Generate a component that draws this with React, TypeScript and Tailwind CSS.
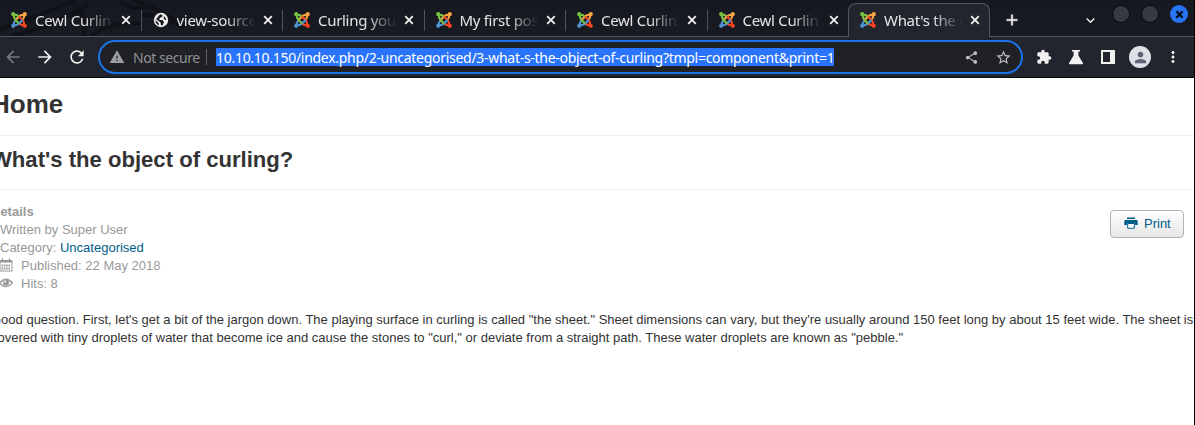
import React from "react";
import {
  MdArrowBack, MdArrowForward, MdRefresh, MdWarning, MdShare, MdStarBorder,
  MdExtension, MdMoreVert, MdPerson, MdAdd, MdExpandMore,
} from "react-icons/md";

function Joomla() {
  return (
    <svg viewBox="0 0 16 16" className="size-4 shrink-0" fill="none" strokeWidth="2.2" strokeLinecap="round">
      <g stroke="#f9a541"><circle cx="13.8" cy="2.2" r="1" fill="#f9a541" /><path d="M13 3C10.5 2.5 9.5 3 8 4.5L4.8 7.7M13 3.2C13.6 5 13 6 12 7" /></g>
      <g stroke="#f44321"><circle cx="13.8" cy="13.8" r="1" fill="#f44321" /><path d="M13 13C13.5 10.5 13 9.5 11.5 8L8.5 5M13 13C11 13.5 10 13 9 12.1" /></g>
      <g stroke="#5091cd"><circle cx="2.2" cy="13.8" r="1" fill="#5091cd" /><path d="M3 13C5.5 13.5 6.5 13 8 11.5L11 8.4M3 13C2.5 11 3 10 4 9" /></g>
      <g stroke="#7ac143"><circle cx="2.2" cy="2.2" r="1" fill="#7ac143" /><path d="M3 3C2.5 5.5 3 6.5 4.5 8L7.5 11M3 3C5 2.5 6 3 7 4" /></g>
    </svg>
  );
}

function Globe() {
  return (
    <svg viewBox="0 0 16 16" className="size-4 shrink-0">
      <circle cx="8" cy="8" r="7.2" fill="#f1f1f1" />
      <path d="M7 2.300L9.500 3L9 5L6.500 6V8H9.500L11 10L9.500 13.500L8 13L7.500 10.500L3 7L2.500 9.500Q3 12.500 6 13.500L5.500 11L2.500 8M11 4L13.500 7.500L12 8L10.500 6.500Z" fill="#17191f" />
    </svg>
  );
}

const tabs = ["Cewl Curlin", "view-source", "Curling you", "My first pos", "Cewl Curlin", "Cewl Curlin", "What's the o"];

function Tab({ title, index }: { title: string; index: number }) {
  const active = index === 6;
  return (
    <div className={`relative flex shrink-0 w-[141.5px] ${active ? "-ml-px mt-[3px] h-[34px] rounded-t-[8px] border border-b-0 border-[#56585d] bg-[#22252e] pl-[11px] pt-[8px]" : "h-[36px] pl-[11px] pt-[12px]"}`}>
      {title.startsWith("view") ? <Globe /> : <Joomla />}
      <div className="-mt-[3px] ml-[8px] h-[22px] w-[80px] whitespace-nowrap text-[15px] leading-[22px] tracking-[-0.3px] text-[#e6e6e6] [mask-image:linear-gradient(to_right,black_60%,transparent_98%)]">{title}</div>
      <svg viewBox="0 0 10 10" className="ml-[6px] mt-[3px] size-[10px] shrink-0"><path d="M1.200 1.200l7.600 7.600m0-7.600l-7.600 7.600" stroke="#f0f0ee" strokeWidth="1.8" /></svg>
      {index < 5 && <div className="absolute right-0 top-[10px] h-[21px] w-px bg-[#505258]" />}
    </div>
  );
}

function TabStrip() {
  return (
    <div className="relative flex h-[37px] border-b border-[#56585d] bg-[linear-gradient(#151821,#181b21)]">
      <svg className="absolute left-0 top-0 h-[36px] w-[200px]" viewBox="0 0 200 36" fill="none">
        <path d="M0 29Q38 17 75 0M12 36Q55 26 88 5M68 0Q88 12 84 36M91 36Q105 23 142 23M119 1Q135 12 151 6M134 0Q168 12 184 28Q158 13 140 15" stroke="#101217" strokeWidth="4" />
      </svg>
      {tabs.map((t, i) => <Tab key={i} title={t} index={i} />)}
      <MdAdd className="ml-[13px] mt-[11px] size-[18px] shrink-0 text-[#f0f0ee] [stroke-width:.7] [&>path:first-child]:[stroke:none]" />
      <div className="ml-auto mr-[6px] flex">
        <MdExpandMore className="mr-[13px] mt-[12px] size-[17px] text-[#f0f0ee]" />
        <div className="mr-[11px] mt-[5px] size-[18px] rounded-full border border-[#090a0d] bg-[#343944]" />
        <div className="mr-[11px] mt-[5px] size-[18px] rounded-full border border-[#090a0d] bg-[#343944]" />
        <div className="mt-[5px] flex size-[18px] items-center justify-center rounded-full bg-[#2874f7]">
          <svg viewBox="0 0 10 10" className="size-[9px]"><path d="M1.500 1.500l7 7m0-7l-7 7" stroke="#080b12" strokeWidth="2.4" /></svg>
        </div>
      </div>
    </div>
  );
}

function Toolbar() {
  return (
    <div className="flex h-[41px] items-center border-b border-[#090a0c] bg-[#22252e] text-[#f0f0ee]">
      <MdArrowBack className="ml-[3px] size-5 text-[#777980]" />
      <MdArrowForward className="ml-[12px] size-5" />
      <MdRefresh className="ml-[12px] size-5" />
      <div className="ml-[11px] flex h-[34px] w-[925px] items-center rounded-full border-2 border-[#1a73e8] bg-[#202124] pl-[9px]">
        <MdWarning className="size-4 text-[#9a9da2]" />
        <span className="ml-[8px] w-[66px] whitespace-nowrap pt-px text-[14px] leading-[18px] tracking-[-0.45px] text-[#8f9195]">Not secure</span>
        <span className="ml-[7px] h-4 w-px bg-[#5f6167]" />
        <span className="ml-[9px] h-[18px] w-[618px] whitespace-nowrap bg-[#2a74fb] text-[14px] leading-[19px] tracking-[-0.287px] text-white">10.10.10.150/index.php/2-uncategorised/3-what-s-the-object-of-curling?tmpl=component&amp;print=1</span>
        <MdShare className="ml-auto size-[15px] text-[#bfc1c5]" />
        <MdStarBorder className="ml-[16px] mr-[9px] size-[17px] text-[#bfc1c5]" />
      </div>
      <MdExtension className="ml-[13px] size-4" />
      <svg className="ml-[16px] size-4" viewBox="0 0 16 16" fill="currentColor"><path d="M4 1h8v1.6h-1.6v4L15 14q.4 1.2-.9 1.2H1.9Q.6 15.2 1 14l4.6-7.4v-4H4z" /></svg>
      <svg className="ml-[17px] size-[14px]" viewBox="0 0 14 14" fill="currentColor" fillRule="evenodd"><path d="M0 0h14v14H0zM2 2v10h7V2z" /></svg>
      <div className="ml-[14px] flex size-[22px] items-center justify-center rounded-full bg-[#dfe1e6]"><MdPerson className="size-[17px] text-[#5c6475]" /></div>
      <MdMoreVert className="ml-[13px] size-[18px]" />
    </div>
  );
}

export default function App() {
  return (
    <div className="h-[425px] w-[1195px] overflow-hidden border-r border-black bg-white">
      <header className="font-['Noto_Sans',sans-serif]"><TabStrip /><Toolbar /></header>
      <main className="-ml-[9px] w-[1220px] font-['Liberation_Sans',Arial,sans-serif] text-[13px] leading-[18px] text-[#333]">
        <h1 className="h-[58px] border-b border-[#eee] pt-[8px] text-[26px] font-bold leading-[36px]">Home</h1>
        <h2 className="h-[54px] border-b border-[#eee] pt-[6px] text-[22.1px] font-bold leading-[36px]">What's the object of curling?</h2>
        <div className="flex justify-between pr-[27px] pt-[13px]">
          <dl className="text-[#999]">
            <dt className="font-bold">Details</dt>
            <dd className="pl-[9px]">Written by Super User</dd>
            <dd className="pl-[9px]">Category: <a className="text-[#005e8d]">Uncategorised</a></dd>
            <dd className="flex pl-[8px]">
              <svg className="mr-[8px] mt-[1px] h-[14px] w-[14px]" viewBox="0 0 14 14"><path d="M1 2.500h12v10.500H1zM1 3.200h12M3.500 0v3M10.500 0v3" fill="none" stroke="#999" /><path d="M1 2h12v2.500H1z" fill="#999" /><path d="M2.500 7.500h9M2.500 10.500h9" stroke="#999" strokeWidth="2" strokeDasharray="1.600 .7" /></svg>
              Published: 22 May 2018
            </dd>
            <dd className="flex pl-[8px]">
              <svg className="mr-[8px] mt-[3px] h-[10px] w-[14px]" viewBox="0 0 14 10"><path d="M.500 5Q7-2.500 13.500 5Q7 12 .500 5z" fill="none" stroke="#999" strokeWidth="1.300" /><circle cx="7" cy="4.500" r="3" fill="#999" /><circle cx="6" cy="3.500" r="1" fill="#fff" /></svg>
              Hits: 8
            </dd>
          </dl>
          <button className="mt-[7px] flex h-[28px] w-[74px] items-center rounded-[4px] border border-[#b3b3b3] bg-gradient-to-b from-white to-[#e6e6e6] pl-[13px] text-[#005e8d]">
            <svg className="-mt-[3px] mr-[6px] h-[12px] w-[14px]" viewBox="0 0 14 12" fill="currentColor"><path d="M3 .500h8v1.500H3zM1.500 3h11q1.200 0 1.200 1.200V8H11V6.500H3V8H.300V4.200Q.300 3 1.500 3z" /><path d="M3.700 6.500h6.600v4.800H3.700z" fill="#fff" stroke="currentColor" /></svg>
            <span>Print</span>
          </button>
        </div>
        <p className="mt-[18px] whitespace-nowrap">Good question. First, let's get a bit of the jargon down. The playing surface in curling is called "the sheet." Sheet dimensions can vary, but they're usually around 150 feet long by about 15 feet wide. The sheet is<br />covered with tiny droplets of water that become ice and cause the stones to "curl," or deviate from a straight path. These water droplets are known as "pebble."</p>
      </main>
    </div>
  );
}
